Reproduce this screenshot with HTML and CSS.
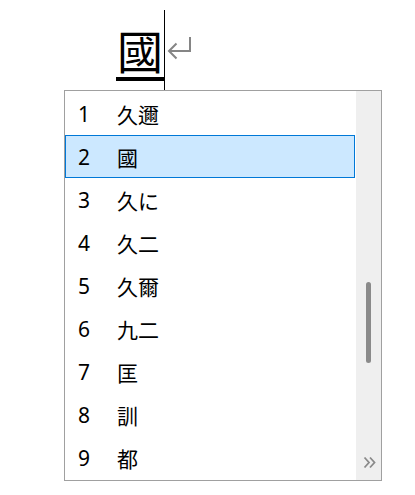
FILE: index.html
```html
<!DOCTYPE html>
<html>
<head>
<meta charset="utf-8">
<link rel="stylesheet" href="styles.css">
</head>
<body>
<div class="compose">
  <span class="char">國</span>
  <span class="caret"></span>
  <svg class="enter" width="28" height="26" viewBox="0 0 28 26">
    <path d="M24 1 V15 H3" fill="none" stroke="#858585" stroke-width="2"/>
    <path d="M10.5 7.5 L3 15 L10.5 22.5" fill="none" stroke="#858585" stroke-width="2"/>
  </svg>
</div>
<div class="popup">
  <ul class="list">
    <li class="row"><span class="num">1</span><span class="cand">久邇</span></li>
    <li class="row selected"><span class="num">2</span><span class="cand">國</span></li>
    <li class="row"><span class="num">3</span><span class="cand">久に</span></li>
    <li class="row"><span class="num">4</span><span class="cand">久二</span></li>
    <li class="row"><span class="num">5</span><span class="cand">久爾</span></li>
    <li class="row"><span class="num">6</span><span class="cand">九二</span></li>
    <li class="row"><span class="num">7</span><span class="cand">匡</span></li>
    <li class="row"><span class="num">8</span><span class="cand">訓</span></li>
    <li class="row"><span class="num">9</span><span class="cand">都</span></li>
  </ul>
  <div class="scrollbar">
    <div class="thumb"></div>
    <svg class="more" width="13" height="13" viewBox="0 0 13 13">
      <path d="M1.5 1.5 L6 6.5 L1.5 11.5 M7 1.5 L11.5 6.5 L7 11.5" fill="none" stroke="#8a8a8a" stroke-width="1.8"/>
    </svg>
  </div>
</div>
</body>
</html>
```
FILE: styles.css
```css
html, body {
  margin: 0;
  padding: 0;
  background: #ffffff;
}
body {
  width: 415px;
  height: 495px;
  font-family: "Noto Sans", "Noto Sans CJK JP", sans-serif;
}
.compose {
  height: 90px;
  display: flex;
  align-items: flex-start;
  padding-left: 116px;
}
.char {
  margin-top: 22px;
  width: 48px;
  height: 55px;
  font-family: "Noto Sans CJK JP", sans-serif;
  font-size: 46px;
  line-height: 55px;
  text-align: center;
  color: #000;
  border-bottom: 4px solid #000;
}
.caret {
  margin-top: 10px;
  width: 1px;
  height: 80px;
  background: #000;
}
.enter {
  margin-top: 36px;
  margin-left: 1px;
}
.popup {
  margin-left: 64px;
  width: 316px;
  height: 389px;
  border: 1px solid #a0a0a0;
  display: flex;
}
.list {
  list-style: none;
  margin: 0;
  padding: 1px 1px 0 0;
  flex: 1;
}
.row {
  height: 43px;
  box-sizing: border-box;
  display: flex;
  align-items: center;
  border: 1px solid transparent;
  color: #000;
}
.row.selected {
  background: #cce8ff;
  border-color: #0078d7;
}
.num {
  width: 39px;
  padding-left: 12px;
  font-size: 21px;
}
.cand {
  font-family: "Noto Sans CJK JP", sans-serif;
  font-size: 21px;
  line-height: 1;
  padding-top: 2px;
}
.scrollbar {
  width: 25px;
  background: #efefef;
  display: flex;
  flex-direction: column;
  align-items: center;
}
.thumb {
  margin-top: 191px;
  width: 5px;
  height: 81px;
  border-radius: 3px;
  background: #8a8a8a;
}
.more {
  margin-top: auto;
  margin-bottom: 11px;
  margin-left: 2px;
}
```
